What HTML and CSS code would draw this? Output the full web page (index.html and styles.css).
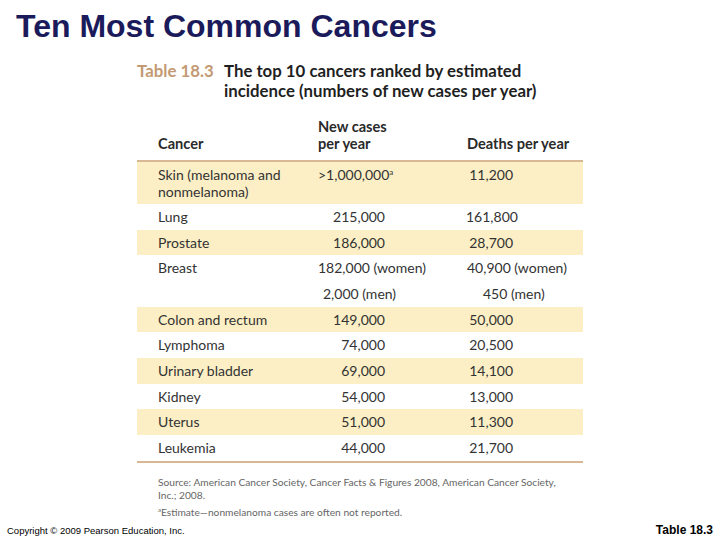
FILE: index.html
```html
<!DOCTYPE html>
<html>
<head>
<meta charset="utf-8">
<link rel="stylesheet" href="styles.css">
</head>
<body>
<div class="page">
  <h1 class="slide-title">Ten Most Common Cancers</h1>
  <div class="table-wrap">
    <div class="caption">
      <div class="cap-label">Table 18.3</div>
      <div class="cap-text">The top 10 cancers ranked by estimated<br>incidence (numbers of new cases per year)</div>
    </div>
    <div class="row head">
      <div class="c1">Cancer</div>
      <div class="c2">New cases<br>per year</div>
      <div class="c3">Deaths per year</div>
    </div>
    <div class="row band tall">
      <div class="c1">Skin (melanoma and<br>nonmelanoma)</div>
      <div class="c2 left">&gt;1,000,000<sup>a</sup></div>
      <div class="c3">11,200</div>
    </div>
    <div class="row"><div class="c1">Lung</div><div class="c2">215,000</div><div class="c3">161,800</div></div>
    <div class="row band"><div class="c1">Prostate</div><div class="c2">186,000</div><div class="c3">28,700</div></div>
    <div class="row"><div class="c1">Breast</div><div class="c2 left">182,000 (women)</div><div class="c3 left">40,900 (women)</div></div>
    <div class="row"><div class="c1"></div><div class="c2 men">2,000 (men)</div><div class="c3 men">450 (men)</div></div>
    <div class="row band"><div class="c1">Colon and rectum</div><div class="c2">149,000</div><div class="c3">50,000</div></div>
    <div class="row"><div class="c1">Lymphoma</div><div class="c2">74,000</div><div class="c3">20,500</div></div>
    <div class="row band"><div class="c1">Urinary bladder</div><div class="c2">69,000</div><div class="c3">14,100</div></div>
    <div class="row"><div class="c1">Kidney</div><div class="c2">54,000</div><div class="c3">13,000</div></div>
    <div class="row band"><div class="c1">Uterus</div><div class="c2">51,000</div><div class="c3">11,300</div></div>
    <div class="row last"><div class="c1">Leukemia</div><div class="c2">44,000</div><div class="c3">21,700</div></div>
    <div class="notes">
      <p class="src">Source: American Cancer Society, Cancer Facts &amp; Figures 2008, American Cancer Society,<br>Inc.; 2008.</p>
      <p class="note"><sup>a</sup>Estimate—nonmelanoma cases are often not reported.</p>
    </div>
  </div>
  <div class="footer">
    <span class="copy">Copyright © 2009 Pearson Education, Inc.</span>
    <span class="ref">Table 18.3</span>
  </div>
</div>
</body>
</html>
```

FILE: styles.css
```css
* { box-sizing: border-box; }
html, body { margin: 0; padding: 0; background: #fff; }
.page {
  width: 720px;
  height: 540px;
  display: flex;
  flex-direction: column;
  font-family: Lato, "Liberation Sans", sans-serif;
}
.slide-title {
  margin: 0;
  padding: 7px 0 0 16px;
  height: 54px;
  flex: none;
  font-family: "Liberation Sans", Arial, sans-serif;
  font-weight: bold;
  font-size: 32px;
  line-height: 38px;
  color: #1b1b5c;
}
.table-wrap {
  margin-left: 137px;
  width: 446px;
}
.caption {
  display: flex;
  font-weight: bold;
  font-size: 16.8px;
  line-height: 20px;
  color: #1f1f1f;
  padding-top: 7px;
}
.cap-label { width: 87px; color: #c39a73; }
.row {
  display: grid;
  grid-template-columns: 181px 148px 117px;
  font-size: 14px;
  line-height: 17.65px;
  padding: 4px 0;
  color: #333;
  white-space: nowrap;
}
.row .c1 { padding-left: 21px; }
.row .c2 { text-align: right; padding-right: 81px; }
.row .c3 { text-align: right; padding-right: 70px; }
.row .c2.left { text-align: left; padding-right: 0; }
.row .c3.left { text-align: left; padding-right: 0; padding-left: 1px; }
.row .c2.men { text-align: left; padding-left: 5px; padding-right: 0; }
.row .c3.men { text-align: left; padding-left: 17px; padding-right: 0; }
.row sup { font-size: 8px; line-height: 0; vertical-align: 5px; }
.head {
  margin-top: 18px;
  font-weight: bold;
  font-size: 14.6px;
  line-height: 16.5px;
  padding: 0 0 8px;
  border-bottom: 2px solid #d9b894;
  align-items: end;
  color: #2a2a2a;
}
.head .c2 { text-align: left; padding-right: 0; }
.head .c3 { text-align: left; padding-right: 0; padding-left: 1px; }
.band { background: #fcefc5; }
.tall { line-height: 17px; padding: 4px 0 4px; }
.last { border-bottom: 2px solid #d9b894; }
.notes {
  padding-left: 21px;
  padding-top: 13px;
  font-size: 10.2px;
  color: #666;
}
.notes p { margin: 0; line-height: 13px; }
.notes .note { margin-top: 4px; }
.notes sup { font-size: 6px; line-height: 0; vertical-align: 4px; }
.footer {
  margin-top: auto;
  display: flex;
  justify-content: space-between;
  align-items: baseline;
  padding: 0 7px 3px 7px;
}
.copy {
  font-family: "Liberation Sans", Arial, sans-serif;
  font-size: 9.5px;
  color: #000;
}
.ref {
  font-family: "Liberation Sans", Arial, sans-serif;
  font-weight: bold;
  font-size: 12px;
  color: #000;
}
```
